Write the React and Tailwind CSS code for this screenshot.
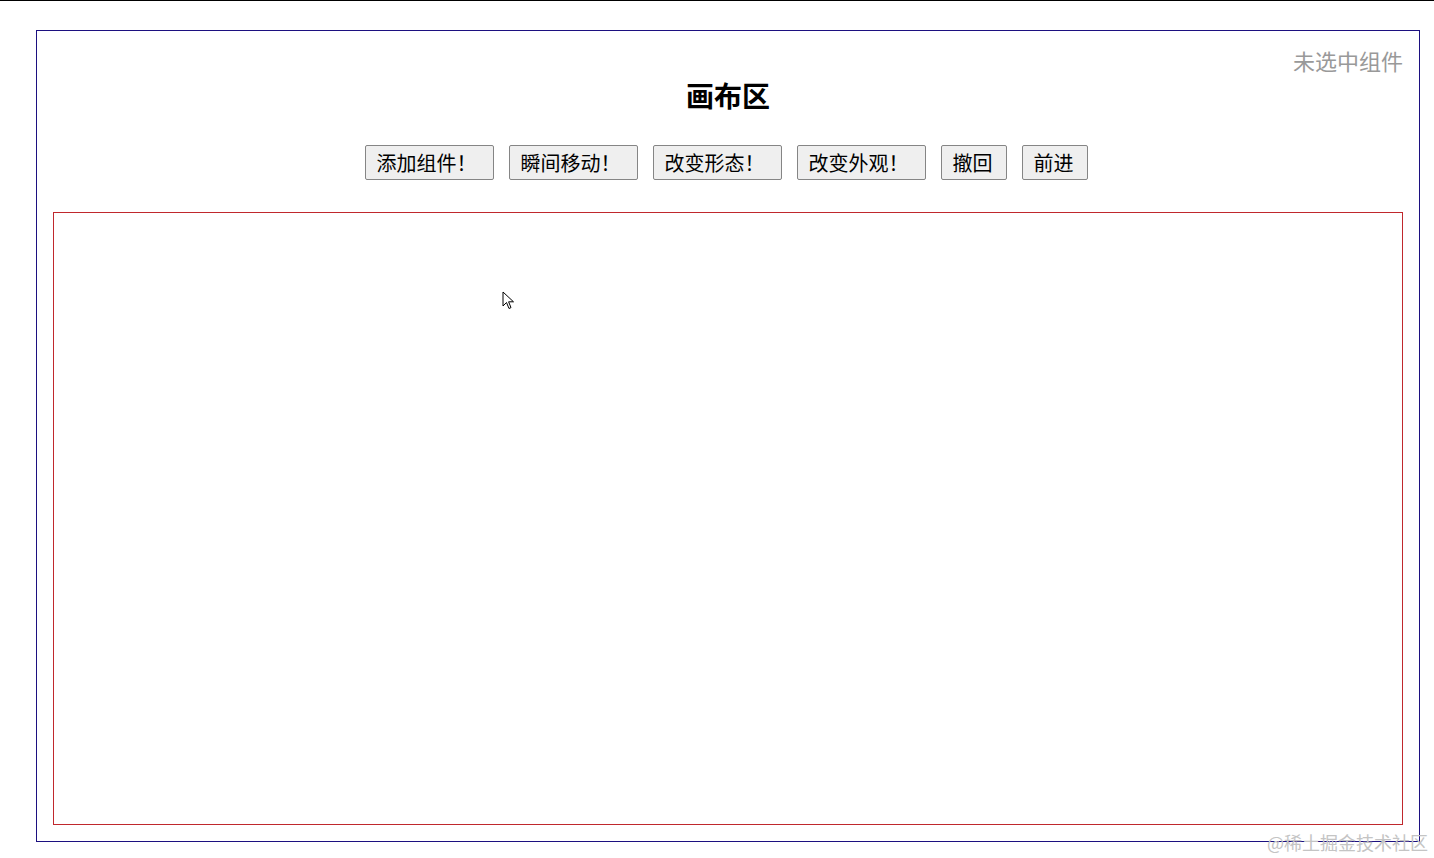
import React from 'react'

const buttons = [
  { label: '添加组件！', w: 'w-[129px]' },
  { label: '瞬间移动！', w: 'w-[129px]' },
  { label: '改变形态！', w: 'w-[129px]' },
  { label: '改变外观！', w: 'w-[129px]' },
  { label: '撤回', w: 'w-[66px]' },
  { label: '前进', w: 'w-[66px]' },
]

function Cursor() {
  return (
    <svg className="absolute left-[502px] top-[291px]" width="14" height="20" viewBox="0 0 14 20">
      <path
        d="M1 1 L1 15 L4.5 11.5 L7 17.5 L9 16.6 L6.6 10.8 L11.5 10.8 Z"
        fill="white"
        stroke="black"
        strokeWidth="1"
        strokeLinejoin="miter"
      />
    </svg>
  )
}

export default function App() {
  return (
    <div
      className="relative w-full h-[858px] bg-white overflow-hidden"
      style={{ fontFamily: '"Microsoft YaHei", "Noto Sans CJK SC", "Noto Sans", sans-serif' }}
    >
      <div className="h-px bg-black w-full" />
      <div className="pt-[29px] pl-[36px]">
        <div className="w-[1384px] h-[812px] border border-[#1c1080] flex flex-col px-4 pb-4">
          {/* status */}
          <div className="flex justify-end mt-[16px]">
            <span className="text-[22px] leading-[26px] text-[#999999]">未选中组件</span>
          </div>

          {/* title */}
          <h1 className="mt-[6px] text-center text-[28px] leading-[32px] font-bold text-black">画布区</h1>

          {/* toolbar */}
          <div className="mt-[34px] mr-[4px] flex justify-center gap-[15px]">
            {buttons.map((b) => (
              <button
                key={b.label}
                className={`${b.w} h-[35px] pl-[11px] text-left text-[20px] leading-none text-black bg-[#efefef] border border-[#858585] rounded-[2px]`}
              >
                {b.label}
              </button>
            ))}
          </div>

          {/* canvas */}
          <div className="mt-[32px] flex-1 border border-[#c0282d] bg-white" />
        </div>
      </div>

      <Cursor />

      <div className="absolute right-[6px] top-[830px] text-[18px] leading-[24px] text-[#c4c4c4]">
        @稀土掘金技术社区
      </div>
    </div>
  )
}
